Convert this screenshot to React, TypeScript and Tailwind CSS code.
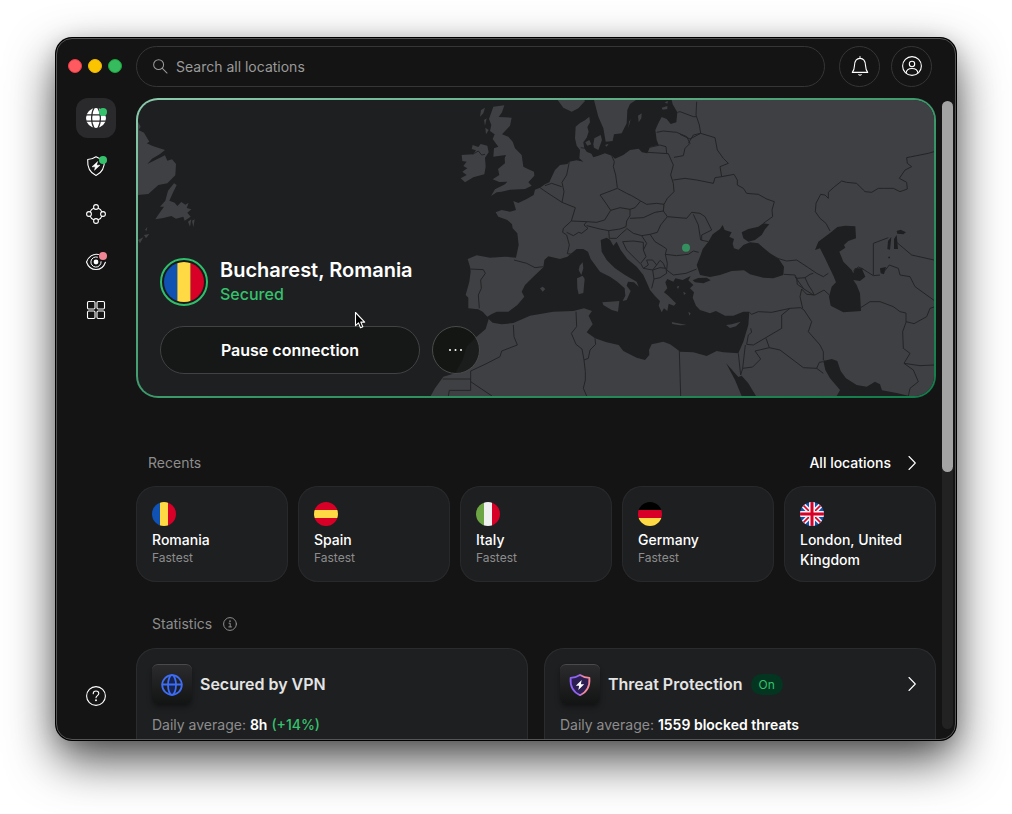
import type { ReactNode } from "react";

type FlagName = "romania" | "spain" | "italy" | "germany" | "uk";

const recents: { name: string; note?: string; flag: FlagName }[] = [
  { name: "Romania", note: "Fastest", flag: "romania" },
  { name: "Spain", note: "Fastest", flag: "spain" },
  { name: "Italy", note: "Fastest", flag: "italy" },
  { name: "Germany", note: "Fastest", flag: "germany" },
  { name: "London, United Kingdom", flag: "uk" },
];

const verticalFlag = (a: string, b: string, c: string) => (
  <>
    <path fill={a} d="M0 0h8v24H0z" />
    <path fill={b} d="M8 0h8v24H8z" />
    <path fill={c} d="M16 0h8v24h-8z" />
  </>
);

const horizontalFlag = (a: string, b: string, c: string) => (
  <>
    <path fill={a} d="M0 0h24v8H0z" />
    <path fill={b} d="M0 8h24v8H0z" />
    <path fill={c} d="M0 16h24v8H0z" />
  </>
);

const flags: Record<FlagName, ReactNode> = {
  romania: verticalFlag("#0f52b4", "#ffda44", "#d80027"),
  spain: horizontalFlag("#d80027", "#ffda44", "#d80027"),
  italy: verticalFlag("#6da544", "#f0f0f0", "#d80027"),
  germany: horizontalFlag("#000", "#d80027", "#ffda44"),
  uk: (
    <>
      <path fill="#0f52b4" d="M0 0h24v24H0z" />
      <path stroke="#f0f0f0" strokeWidth="5" d="m0 0 24 24M24 0 0 24" />
      <path stroke="#d80027" strokeWidth="1.6" d="m0 0 24 24M24 0 0 24" />
      <path stroke="#f0f0f0" strokeWidth="6" d="M12 0v24M0 12h24" />
      <path stroke="#d80027" strokeWidth="3" d="M12 0v24M0 12h24" />
    </>
  ),
};

const Flag = ({ name, className }: { name: FlagName; className: string }) => (
  <svg viewBox="0 0 24 24" className={`rounded-full ${className}`} aria-hidden>
    {flags[name]}
  </svg>
);

const Icon = ({
  children,
  className = "size-5",
  viewBox = "0 0 20 20",
}: {
  children: ReactNode;
  className?: string;
  viewBox?: string;
}) => (
  <svg
    viewBox={viewBox}
    className={`shrink-0 overflow-visible ${className}`}
    fill="none"
    stroke="currentColor"
    strokeWidth="1.1"
    strokeLinecap="round"
    strokeLinejoin="round"
    aria-hidden
  >
    {children}
  </svg>
);

const Chevron = () => (
  <Icon className="h-4 w-2" viewBox="0 0 8 16">
    <path d="m1 1.500 6.300 6.500L1 14.500" />
  </Icon>
);

const sidebarItems: { label: string; icon: ReactNode; active?: boolean }[] = [
  {
    label: "VPN",
    active: true,
    icon: (
      <Icon>
        <circle cx="10" cy="10" r="10" fill="#fff" stroke="none" />
        <g stroke="#2a2a2c" strokeWidth="1.2">
          <path d="M0 6.800h20M0 13.200h20" />
          <path d="M8 0C4.800 5 4.800 15 8 20M12 0c3.200 5 3.200 15 0 20" />
        </g>
        <circle cx="17" cy="4" r="4" fill="#36c26d" stroke="none" />
      </Icon>
    ),
  },
  {
    label: "Threat Protection",
    icon: (
      <Icon>
        <path d="M10 .700c2.600 1.700 5.300 2.600 8.300 2.800.500 7.500-1.800 13-8.300 16C3.500 16.500 1.200 11 1.700 3.500 4.700 3.300 7.400 2.400 10 .700Z" />
        <path
          d="M11.500 5.700 6 10.800h3.300L8.500 14.300 14 9.200h-3.300z"
          fill="#fff"
          strokeWidth=".5"
        />
        <circle cx="17" cy="4" r="4" fill="#36c26d" stroke="none" />
      </Icon>
    ),
  },
  {
    label: "Meshnet",
    icon: (
      <Icon>
        <circle cx="10" cy="3" r="2.400" />
        <circle cx="10" cy="17" r="2.400" />
        <circle cx="3" cy="10" r="2.400" />
        <circle cx="17" cy="10" r="2.400" />
        <path d="M7.700 4.300Q5 5.200 4.300 7.700M12.300 4.300q2.700.900 3.400 3.400M4.300 12.300q.700 2.500 3.400 3.400M15.700 12.300q-.700 2.500-3.400 3.400" />
      </Icon>
    ),
  },
  {
    label: "Dark Web Monitor",
    icon: (
      <Icon>
        <path d="M12.500 2.500C7 1.300 2.200 4.800.500 10c1.700 4.900 5.500 7.500 9.500 7.500s7.800-2.600 9.400-7.300" />
        <path d="M11.500 5.100A5.100 5.100 0 1 0 15.100 9.700" strokeWidth="1" />
        <circle cx="10" cy="10" r="2.400" fill="#fff" stroke="none" />
        <circle cx="17" cy="4" r="4" fill="#f08694" stroke="none" />
      </Icon>
    ),
  },
  {
    label: "All features",
    icon: (
      <Icon>
        <rect x="1.500" y="1.500" width="7.500" height="7.500" rx="1.200" />
        <rect x="11" y="1.500" width="7.500" height="7.500" rx="1.200" />
        <rect x="1.500" y="11" width="7.500" height="7.500" rx="1.200" />
        <rect x="11" y="11" width="7.500" height="7.500" rx="1.200" />
      </Icon>
    ),
  },
];

const WorldMap = () => (
  <svg
    viewBox="-876 15 2388 888"
    preserveAspectRatio="xMaxYMid slice"
    className="absolute inset-0 size-full"
    strokeLinejoin="round"
    aria-hidden
  >
    {/* land */}
    <g fill="#3f4043">
      <path d="M725 15 728 28 742 52 739 82 722 87 710 72 695 66 685 85 676 105 680 135 686 150 660 156 652 175 636 172 626 161 600 165 580 180 555 191 545 182 525 175 505 182 490 187 484 176 470 170 463 160 460 142 470 128 476 110 472 96 480 82 478 65 465 76 450 84 437 95 435 130 440 152 450 165 448 190 460 200 440 196 418 200 412 207 390 210 375 225 364 248 358 262 345 268 330 278 315 284 311 300 290 312 265 324 250 318 258 345 240 350 215 345 197 352 205 365 232 375 246 388 248 400 262 415 266 450 258 488 225 485 180 488 140 481 113 492 120 515 122 530 118 560 107 600 115 608 115 640 145 643 158 650 172 665 184 658 200 650 235 650 262 630 283 605 275 590 285 570 310 545 340 517 343 495 355 484 390 492 412 485 428 472 440 462 460 462 474 470 482 492 510 530 540 545 562 560 584 580 586 602 578 618 590 615 602 588 590 572 594 560 612 562 626 575 620 560 585 540 555 520 530 495 515 470 512 435 530 428 540 434 550 452 560 440 572 465 592 492 620 515 640 540 650 562 660 585 675 603 690 618 686 632 695 652 702 640 712 648 716 626 732 632 738 625 715 602 702 592 712 580 706 562 712 552 730 560 736 550 758 555 782 543 775 556 790 570 780 580 792 592 788 608 798 632 810 645 840 655 858 648 885 662 910 662 940 650 958 650 955 690 940 740 925 775 880 772 860 768 830 783 790 772 750 770 740 762 720 748 700 740 665 748 657 765 658 780 645 795 620 788 580 768 566 750 530 742 495 730 470 712 488 688 476 662 486 648 462 640 430 648 370 650 300 662 250 684 215 688 188 683 176 672 167 702 140 725 110 755 98 795 75 835 40 845 15 880 2 903 1512 903 1512 15Z" />
      <path d="M383 15 400 38 425 50 445 40 465 18 463 15ZM492 15 505 65 520 100 527 140 548 138 552 118 575 115 590 85 592 45 600 27 618 15Z" />
      <path d="M190 35 223 31 216 52 206 66 245 68 240 92 216 118 235 125 248 140 255 160 275 180 280 215 292 221 312 230 313 242 295 262 305 272 285 282 240 284 214 290 200 292 183 303 195 283 225 268 232 260 208 261 188 253 208 240 204 222 225 205 224 190 228 180 205 183 190 185 192 160 205 155 188 132 194 118 180 108 184 90 177 72Z" />
      <path d="M95 180 130 178 138 166 125 162 128 150 145 156 152 147 172 152 176 172 165 188 167 215 163 238 130 247 105 262 92 250 110 240 97 230 112 220 100 213 110 200 97 198Z" />
      <path d="M153 45 165 38 160 55 150 65ZM162 75 170 70 165 92ZM166 98 176 105 168 118ZM466 142 478 135 484 148 472 152ZM493 130 512 120 516 135 505 165 492 158 490 148ZM525 150 536 146 530 155ZM624 62 635 55 634 70 626 82ZM597 80 602 72 595 100ZM695 38 712 33 712 42 698 44ZM704 22 714 18 712 26Z" />
      {/* mediterranean islands */}
      <path d="M458 502 460 520 454 540 446 525 449 512ZM441 550 458 542 464 552 460 594 446 598 442 580ZM517 622 540 620 568 618 564 650 545 645 520 630ZM330 580 338 575 346 582 338 590ZM725 681 740 684 770 690 750 691 727 687ZM888 690 905 688 932 680 918 694 900 699Z" />
      <path d="M695 600 720 612 732 628 718 618ZM740 575 748 572 744 582ZM760 590 768 595 762 600ZM745 620 752 616ZM775 650 782 655 778 662Z" />
      {/* labrador and newfoundland */}
      <g transform="translate(-1140 -195)">
        <path d="M262 272 272 290 266 300 282 308 290 322 298 335 290 340 308 348 345 360 330 372 306 386 292 402 345 376 352 392 366 388 378 402 376 436 352 460 325 465 295 492 262 495Z" />
        <path d="M372 460 380 465 368 490 358 512 374 518 382 528 394 516 406 524 416 518 410 534 424 538 412 548 422 560 404 572 400 560 378 566 364 558 340 564 316 568 328 550 342 530 330 530 346 512 354 482ZM414 575 424 568 420 590ZM426 572 434 568 430 592ZM264 630 280 622 270 640ZM285 600 292 590 290 602ZM282 615 298 612 288 625Z" />
      </g>
    </g>

    {/* inland seas */}
    <g fill="#1e1f21">
      <path d="M818 462 835 440 848 418 870 402 878 390 884 405 905 412 898 425 912 432 908 446 912 460 926 464 940 450 960 442 985 445 1000 458 1020 475 1045 490 1062 515 1060 540 1030 550 1000 548 960 538 942 526 905 528 870 540 840 546 810 540 800 510 812 480Z" />
      <path d="M935 412 955 402 985 395 1000 385 1018 388 1005 403 995 420 975 435 955 440 940 430ZM788 556 805 549 830 548 842 556 820 565 795 562Z" />
      <path d="M1155 465 1165 440 1185 425 1205 410 1222 396 1245 392 1276 394 1278 430 1255 438 1242 450 1246 458 1228 470 1240 500 1265 525 1270 535 1275 520 1295 520 1306 545 1290 558 1270 555 1280 570 1290 595 1293 648 1240 652 1202 632 1197 605 1205 575 1218 562 1210 542 1185 490 1170 460Z" />
      <path d="M1180 798 1205 792 1222 798 1232 828 1248 850 1280 870 1310 875 1335 860 1350 868 1356 886 1400 894 1438 903 1220 903 1230 885 1200 850 1186 825ZM888 804 895 812 925 846 935 842 955 865 978 903 935 903 915 855Z" />
      <path d="M1400 408 1412 404 1428 412 1420 418 1402 416ZM1392 432 1400 420 1404 462 1392 462ZM1374 438 1384 426 1380 464 1372 462ZM1350 520 1368 516 1362 538 1352 535ZM1375 485h5v5h-5Z" />
    </g>

    {/* borders */}
    <g fill="none" stroke="#232426" strokeWidth="3">
      <path d="M128 178 145 168 155 180 165 178M452 158 466 160M545 182 553 200 550 215 557 240 562 278M418 200 410 240 396 262 402 290 396 322M330 278 350 292 370 305 396 322 436 338 424 378M345 272 365 265 395 275M424 378 400 400 398 412 410 420 418 450 412 476 428 478M410 412 430 422 446 412 455 415 474 400 462 390 470 380 424 378M470 380 500 382 524 375 542 346 528 325 510 300 562 280 590 295 605 302 632 318 615 338 600 343 570 338 542 346M470 392 510 402 536 407 570 402 588 395 590 378 600 362 600 343M632 318 650 328 680 325 702 328 700 348 675 352 640 368 600 370M700 348 712 365 692 390 682 412 660 418 635 422 610 415 590 400M536 407 538 430 560 430 575 415 590 402M652 172 715 176 730 210 722 240 730 265 732 290 712 310 702 328M655 158 690 150 708 155 710 175M680 112 700 108 740 112 770 125 780 145 765 160 760 182 732 187M730 255 765 250 800 255 850 265 855 248 875 245 912 238 922 255 922 270 940 280 950 295 985 298 1010 312 1033 320 1026 345 1028 365 1000 385" />
      <path d="M712 365 770 370 785 352 810 355 825 365 845 405 815 420 815 435M790 358 805 390 812 435 835 440M578 440 610 438 640 442 640 465M578 440 590 465 630 505M635 422 650 445 640 465 648 485 632 505M660 418 675 440 700 455 710 462 706 478 740 482 775 478 790 468 806 472M706 478 712 505 710 525 730 540 768 535 800 522M632 505 640 520 655 510 650 495 668 495 680 510 668 525 640 520M668 525 690 518 708 520 710 535 690 548 672 552 668 525M672 552 665 580M680 510 690 496 700 505 706 520" />
      <path d="M800 20 798 60 808 90 812 115 790 120 775 145M750 50 790 65 798 65M750 118 780 132 812 115 855 128 862 165 880 190 895 205 870 215 875 245M742 52 750 50" />
      <path d="M1512 170 1495 175 1430 188 1432 205 1445 215 1425 225 1408 250 1430 262 1432 282 1410 290 1390 280 1360 280 1345 280 1325 292 1305 290 1300 285 1280 265 1250 262 1235 258 1210 278 1195 292 1195 310 1185 300 1172 298 1158 325 1156 350 1170 370 1188 385 1200 408" />
      <g transform="translate(0 450)">
        <path d="M252 45 290 55 315 68 340 65M120 72 160 74 166 85 152 105 154 130 145 150 148 190M250 240 252 275 262 300 215 318 210 335 165 358 122 378 122 436 58 436 55 453M38 402 122 402M122 410 186 453M438 200 440 245 424 265 438 298 456 312 462 345 475 340 480 315 497 298 495 280M462 345 466 380 466 405 460 430 470 453M748 318 752 453" />
      </g>
      <g transform="translate(750 450)">
        <path d="M285 38 320 48 350 45 385 68 410 85 430 95 445 85M312 88 345 90 350 100 375 98 390 88 400 85M350 100 352 118 372 132 400 150M375 98 385 120 398 140 402 150M345 95 370 130M365 132 380 148 405 150 432 135 448 150M365 132 360 155 368 190M208 202 215 208 235 200 275 202 330 190 362 188 372 195 395 230 385 260 420 300 430 320 430 345 438 352M330 190 305 210 305 250 220 300 200 298M200 298 205 270 215 262 212 250M258 280 268 308 225 318 242 342 218 366 188 370M268 308 300 315 370 368 410 370 418 352 430 350M410 370 430 385M175 325 182 390 188 370 196 300M542 188 570 170 600 170 640 185 660 200 678 204 678 232 668 260 670 310 690 325 672 355 700 375 715 410 690 430 685 453M678 230 702 236 740 215 750 190 762 186M672 355 720 362 762 360M580 90V-5L625 -22M650 -8 695 30 762 45M545 70 580 92 600 90M612 80 628 60 655 70 660 90 690 95 705 125 762 166M520 78 535 66 550 72" />
      </g>
    </g>
    <circle cx="768" cy="458" r="12" fill="#35905f" />
  </svg>
);

const TopBar = () => (
  <header className="flex h-[60px] shrink-0 items-center pt-2 pr-6 pb-3">
    <div className="flex w-20 shrink-0 gap-1.5 pl-3">
      <button aria-label="Close" className="size-3.5 rounded-full border border-[#ee3b46] bg-[#ff5a60]" />
      <button aria-label="Minimize" className="size-3.5 rounded-full border border-[#f2b600] bg-[#fac400]" />
      <button aria-label="Zoom" className="size-3.5 rounded-full border border-[#17a73b] bg-[#36bb5e]" />
    </div>
    <div className="flex h-[41px] flex-1 items-center rounded-full border border-[#363636] px-4 text-[#9a9a9a]">
      <label htmlFor="search" aria-label="Search all locations">
        <Icon className="size-[15px]" viewBox="0 0 16 16">
          <circle cx="6" cy="6" r="5.300" />
          <path d="m10 10 5 5" />
        </Icon>
      </label>
      <input
        id="search"
        type="text"
        placeholder="Search all locations"
        className="ml-2 h-full w-full bg-transparent text-sm outline-none placeholder:text-[#9a9a9a]"
      />
    </div>
    <button
      aria-label="Notifications"
      className="ml-3.5 flex size-[41px] items-center justify-center rounded-full border border-[#363636]"
    >
      <Icon>
        <path d="M10 .500v1.300M2.300 16.400h15.400c-1.800-2-2-3.500-2.200-7C15.300 5 13 2.400 10 2.400S4.700 5 4.500 9.400c-.200 3.500-.400 5-2.200 7ZM8.800 18.700q1.200 1 2.400 0" />
      </Icon>
    </button>
    <button
      aria-label="Account"
      className="ml-[11px] flex size-[41px] items-center justify-center rounded-full border border-[#363636]"
    >
      <Icon>
        <circle cx="10" cy="10" r="9.400" />
        <circle cx="10" cy="8" r="2.700" />
        <path d="M4.200 16.800c.2-3 2-4.300 5.800-4.300s5.600 1.300 5.800 4.300" />
      </Icon>
    </button>
  </header>
);

const Sidebar = () => (
  <nav className="flex w-20 shrink-0 flex-col items-center gap-2 pb-6">
    {sidebarItems.map((item) => (
      <button
        key={item.label}
        aria-label={item.label}
        className={`flex size-10 items-center justify-center rounded-xl ${item.active ? "bg-[#2a2a2c]" : ""}`}
      >
        {item.icon}
      </button>
    ))}
    <button aria-label="Help" className="mt-auto flex size-10 items-center justify-center">
      <Icon>
        <circle cx="10" cy="10" r="9.400" />
        <path d="M7.200 7.800C7.200 6 8.400 5 10 5s2.800 1 2.800 2.500c0 2.200-2.800 2-2.800 4.300" />
        <circle cx="10" cy="14.300" r=".400" fill="#fff" />
      </Icon>
    </button>
  </nav>
);

const ConnectionCard = () => (
  <section className="shrink-0 rounded-[22px] bg-linear-to-br from-[#8ccbae] via-[#3c9a6c] to-[#107c4a] p-0.5">
    <div className="relative flex h-[296px] flex-col justify-end overflow-hidden rounded-[20px] bg-[#1e1f21] p-[22px]">
      <WorldMap />
      <div className="relative flex items-center gap-3">
        <div className="size-12 rounded-full border-2 border-[#2fbf6b] bg-[#1a1a1a] p-0.5">
          <Flag name="romania" className="size-full" />
        </div>
        <div>
          <h1 className="text-xl leading-6 font-semibold">Bucharest, Romania</h1>
          <p className="leading-6 font-medium text-[#36c26d]">Secured</p>
        </div>
      </div>
      <div className="relative mt-5 flex gap-3">
        <button className="h-12 w-[260px] rounded-full border border-[#404244] bg-[#161817] font-semibold">
          Pause connection
        </button>
        <button
          aria-label="More options"
          className="flex size-12 items-center justify-center rounded-full border border-[#4a4a4a] bg-[#121412]/80"
        >
          <Icon>
            <g fill="#fff" stroke="none">
              <circle cx="4" cy="10" r="1" />
              <circle cx="9.500" cy="10" r="1" />
              <circle cx="15" cy="10" r="1" />
            </g>
          </Icon>
        </button>
      </div>
      <svg viewBox="0 0 12 19" className="absolute bottom-[66px] left-[216px] h-[19px] w-3" aria-hidden>
        <path
          d="M1.500 1.500v13.200l3-2.800 2 4.900 2.300-1-2-4.700h3.900Z"
          fill="#000"
          stroke="#fff"
          strokeWidth="1.100"
          strokeLinejoin="round"
        />
      </svg>
    </div>
  </section>
);

const Recents = () => (
  <section>
    <div className="mt-[47px] mb-[5px] flex h-9 items-center justify-between pr-5 pl-3 text-sm">
      <h2 className="text-[#8d8d8d]">Recents</h2>
      <a href="#locations" className="flex items-center gap-[17px] font-medium">
        All locations
        <Chevron />
      </a>
    </div>
    <div className="grid grid-cols-5 gap-2.5">
      {recents.map((item) => (
        <button
          key={item.name}
          className="flex flex-col items-start rounded-[20px] bg-[#1e1f21] px-4 pt-4 pb-3 text-left inset-ring inset-ring-[#28292b]"
        >
          <Flag name={item.flag} className="size-6" />
          <span className="mt-1 text-sm leading-5 font-medium">{item.name}</span>
          {item.note && <span className="text-xs text-[#8d8d8d]">{item.note}</span>}
        </button>
      ))}
    </div>
  </section>
);

const StatCard = ({
  icon,
  title,
  badge,
  arrow,
  children,
}: {
  icon: ReactNode;
  title: string;
  badge?: string;
  arrow?: boolean;
  children: ReactNode;
}) => (
  <article className="h-48 rounded-[20px] bg-[#1e1f21] p-4 inset-ring inset-ring-[#2b2c2e]">
    <div className="flex items-center">
      <div className="flex size-10 items-center justify-center rounded-md border-t border-[#4a4a4c] bg-linear-to-b from-[#2b2b2d] to-[#131414] shadow-md shadow-black/30">
        {icon}
      </div>
      <h3 className="ml-2 font-semibold text-[#e4e4e4]">{title}</h3>
      {badge && (
        <span className="ml-2 rounded-full bg-[#033520] px-2 text-xs leading-[21px] text-[#36c26d]">{badge}</span>
      )}
      {arrow && (
        <a href="#threat-protection" aria-label="Open Threat Protection" className="mr-1 ml-auto">
          <Chevron />
        </a>
      )}
    </div>
    <p className="mt-[11px] text-sm text-[#8d8d8d]">Daily average: {children}</p>
  </article>
);

const Statistics = () => (
  <section>
    <div className="mt-6 mb-1.5 flex h-9 items-center gap-[11px] pl-4 text-sm text-[#8d8d8d]">
      <h2>Statistics</h2>
      <Icon className="size-3.5" viewBox="0 0 14 14">
        <circle cx="7" cy="7" r="6.400" strokeWidth="1" />
        <path d="M6 6.200h1.200v3.600M5.800 9.900h2.700" strokeWidth="1" />
        <circle cx="7" cy="4.200" r=".300" />
      </Icon>
    </div>
    <div className="grid grid-cols-2 gap-4">
      <StatCard
        title="Secured by VPN"
        icon={
          <Icon className="size-[22px] text-[#3e6df5]" viewBox="0 0 22 22">
            <g strokeWidth="1.800">
              <circle cx="11" cy="11" r="9.800" />
              <ellipse cx="11" cy="11" rx="4" ry="9.800" fill="#152452" />
              <path d="M1.500 10.500h19" />
            </g>
          </Icon>
        }
      >
        <strong className="font-semibold text-white">8h</strong>{" "}
        <span className="font-medium text-[#36c26d]">(+14%)</span>
      </StatCard>
      <StatCard
        title="Threat Protection"
        badge="On"
        arrow
        icon={
          <Icon className="size-[22px]" viewBox="0 0 22 22">
            <defs>
              <linearGradient id="shield" x1="0" x2="1">
                <stop offset=".4" stopColor="#8f63f4" />
                <stop offset=".7" stopColor="#f78a9a" />
              </linearGradient>
            </defs>
            <path
              d="M11 1c2.900 1.800 6 2.700 9.400 2.900C21 12 18.300 18 11 21.200 3.700 18 1 12 1.600 3.900 5 3.700 8.100 2.800 11 1Z"
              fill="#2c1d52"
              stroke="url(#shield)"
              strokeWidth="1.800"
            />
            <path d="M12.700 6 6.800 11.700h3.400L9.300 16l5.900-5.700h-3.400z" fill="#fff" stroke="none" />
          </Icon>
        }
      >
        <strong className="font-semibold text-white">1559 blocked threats</strong>
      </StatCard>
    </div>
  </section>
);

export default function App() {
  return (
    <div className="flex h-screen flex-col bg-white px-14 pt-[38px] pb-[74px] font-['Inter',sans-serif] text-white">
      <div className="relative flex min-h-0 flex-1 flex-col overflow-hidden rounded-2xl bg-[#141414] shadow-[0_0_0_1px_#000,0_20px_48px_rgba(0,0,0,0.7),0_4px_20px_rgba(0,0,0,0.15)]">
        <TopBar />
        <div className="flex min-h-0 flex-1">
          <Sidebar />
          <main className="flex min-w-0 flex-1 flex-col overflow-hidden">
            <ConnectionCard />
            <Recents />
            <Statistics />
          </main>
          <div className="w-5 shrink-0 pt-[3px] pr-[3px] pb-[11px] pl-1.5">
            <div className="h-full rounded-full bg-[#222]">
              <div className="h-[59%] rounded-full bg-[#a3a3a3]" />
            </div>
          </div>
        </div>
        <div className="pointer-events-none absolute inset-0 rounded-2xl border border-[#555]" />
      </div>
    </div>
  );
}
